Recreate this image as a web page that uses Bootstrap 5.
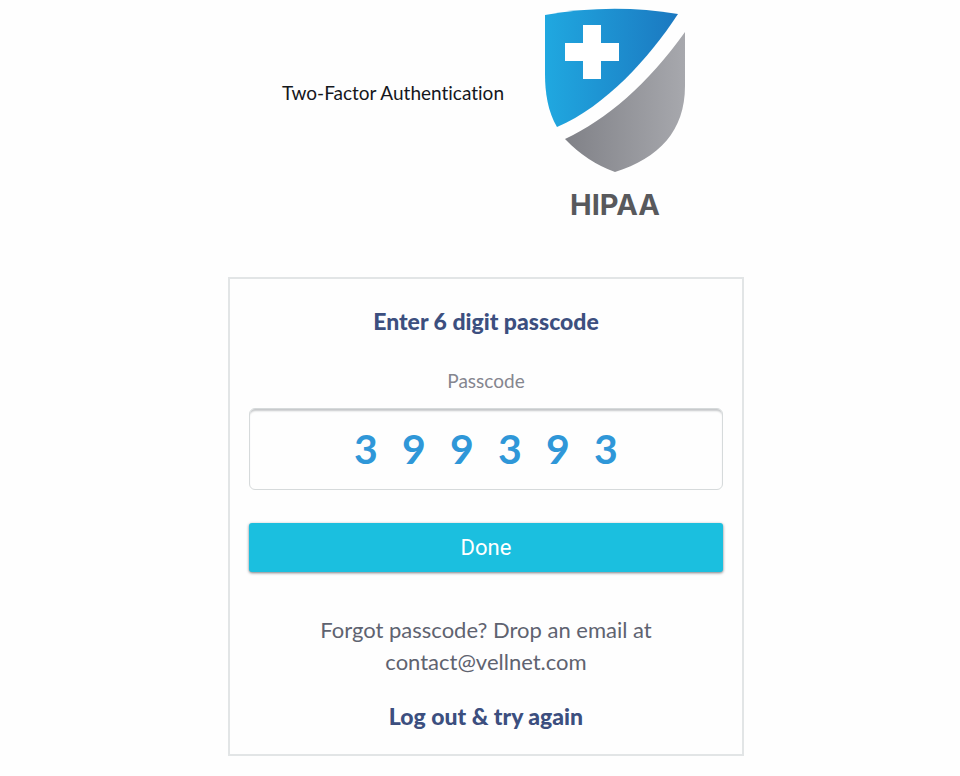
<!DOCTYPE html>
<html lang="en">
<head>
<meta charset="utf-8">
<meta name="viewport" content="width=device-width, initial-scale=1">
<title>Two-Factor Authentication</title>
<link href="https://cdn.jsdelivr.net/npm/bootstrap@5.3.0/dist/css/bootstrap.min.css" rel="stylesheet">
<style>
  body { font-family: Lato, "Noto Sans", sans-serif; font-size: 22px; line-height: 32px; font-variant-ligatures: none; color: #5f6370; background: #fefefe; }
  .auth-page { padding: 8px 0 20px 12px; }
  .auth-header { gap: 40px; margin-bottom: 56px; padding-right: 4px; }
  .page-title { font-size: 19px; line-height: 24px; color: #15171c; margin-top: 73px; }
  .shield { width: 142px; height: 165px; }
  .brand-name { font-family: Inter, Lato, sans-serif; font-size: 29px; line-height: 32px; font-weight: 700; color: #58595c; margin-top: 16px; }
  .auth-card { width: 100%; max-width: 516px; border: 2px solid #e2e5e6; border-radius: 0; padding: 26px 19px 22px; background: #fefefe; }
  .strong-line { font-size: 23px; line-height: 32px; font-weight: 900; color: #3c4f7f; }
  .code-label { font-size: 19px; line-height: 24px; color: #85868f; margin: 32px 0 15px; }
  .code-box { gap: 24px; height: 82px; border: 1px solid #d6dadb; border-radius: 6px; box-shadow: inset 0 3px 2px -1px #c6c8ca; }
  .code-digit { width: 24px; height: 48px; padding: 0; border: 0; outline-offset: 4px; background: transparent; color: #2f97d8; font-size: 41px; line-height: 48px; font-weight: 700; text-align: center; }
  .btn-done { margin: 33px 0 42px; height: 49px; padding: 0; border: 0; border-radius: 3px; background: #1bbfdf; color: #fff; font: 400 22px/48px Roboto, sans-serif; box-shadow: 0 1px 3px #777b80; }
  .btn-done:hover { background: #17accb; color: #fff; }
  .logout { margin-top: 22px; }
</style>
<script src="https://cdn.jsdelivr.net/npm/bootstrap@5.3.0/dist/js/bootstrap.bundle.min.js"></script>
</head>
<body>
<main class="auth-page d-flex flex-column align-items-center">
  <header class="auth-header d-flex justify-content-center align-items-start">
    <h1 class="page-title mb-0 fw-normal">Two-Factor Authentication</h1>
    <div class="text-center">
      <svg class="shield d-block" viewBox="0 0 142 165" role="img" aria-label="Shield with a medical cross">
        <defs>
          <linearGradient id="blueFill" x1="0" y1="0" x2="1" y2="0"><stop offset="0" stop-color="#20a8e0"/><stop offset="1" stop-color="#1b78c0"/></linearGradient>
          <linearGradient id="greyFill" x1="0" y1="0" x2="1" y2="0"><stop offset="0" stop-color="#808187"/><stop offset="1" stop-color="#a7a8ad"/></linearGradient>
        </defs>
        <path fill="url(#blueFill)" d="M1 7Q68-5 134 6C105 50 62 98 13 119C4 104 1 85 1 66Z"/>
        <path fill="url(#greyFill)" d="M141 24V78C141 123 115 150 71 164Q43 154 21 131C62 112 104 76 141 24Z"/>
        <path fill="#fff" d="M39 17H57V35H75V53H57V71H39V53H21V35H39Z"/>
      </svg>
      <div class="brand-name">HIPAA</div>
    </div>
  </header>

  <form class="auth-card card text-center">
    <h2 class="strong-line mb-0">Enter 6 digit passcode</h2>
    <label class="code-label" for="digit1">Passcode</label>
    <div class="code-box d-flex justify-content-center align-items-center">
      <input class="code-digit" id="digit1" type="text" inputmode="numeric" maxlength="1" value="3">
      <input class="code-digit" aria-label="Digit 2" type="text" inputmode="numeric" maxlength="1" value="9">
      <input class="code-digit" aria-label="Digit 3" type="text" inputmode="numeric" maxlength="1" value="9">
      <input class="code-digit" aria-label="Digit 4" type="text" inputmode="numeric" maxlength="1" value="3">
      <input class="code-digit" aria-label="Digit 5" type="text" inputmode="numeric" maxlength="1" value="9">
      <input class="code-digit" aria-label="Digit 6" type="text" inputmode="numeric" maxlength="1" value="3">
    </div>
    <button class="btn btn-done w-100" type="button">Done</button>
    <p class="mb-0">Forgot passcode? Drop an email at<br><a class="text-reset text-decoration-none" href="mailto:contact@vellnet.com">contact@vellnet.com</a></p>
    <a class="logout strong-line text-decoration-none" href="#">Log out &amp; try again</a>
  </form>
</main>
</body>
</html>
